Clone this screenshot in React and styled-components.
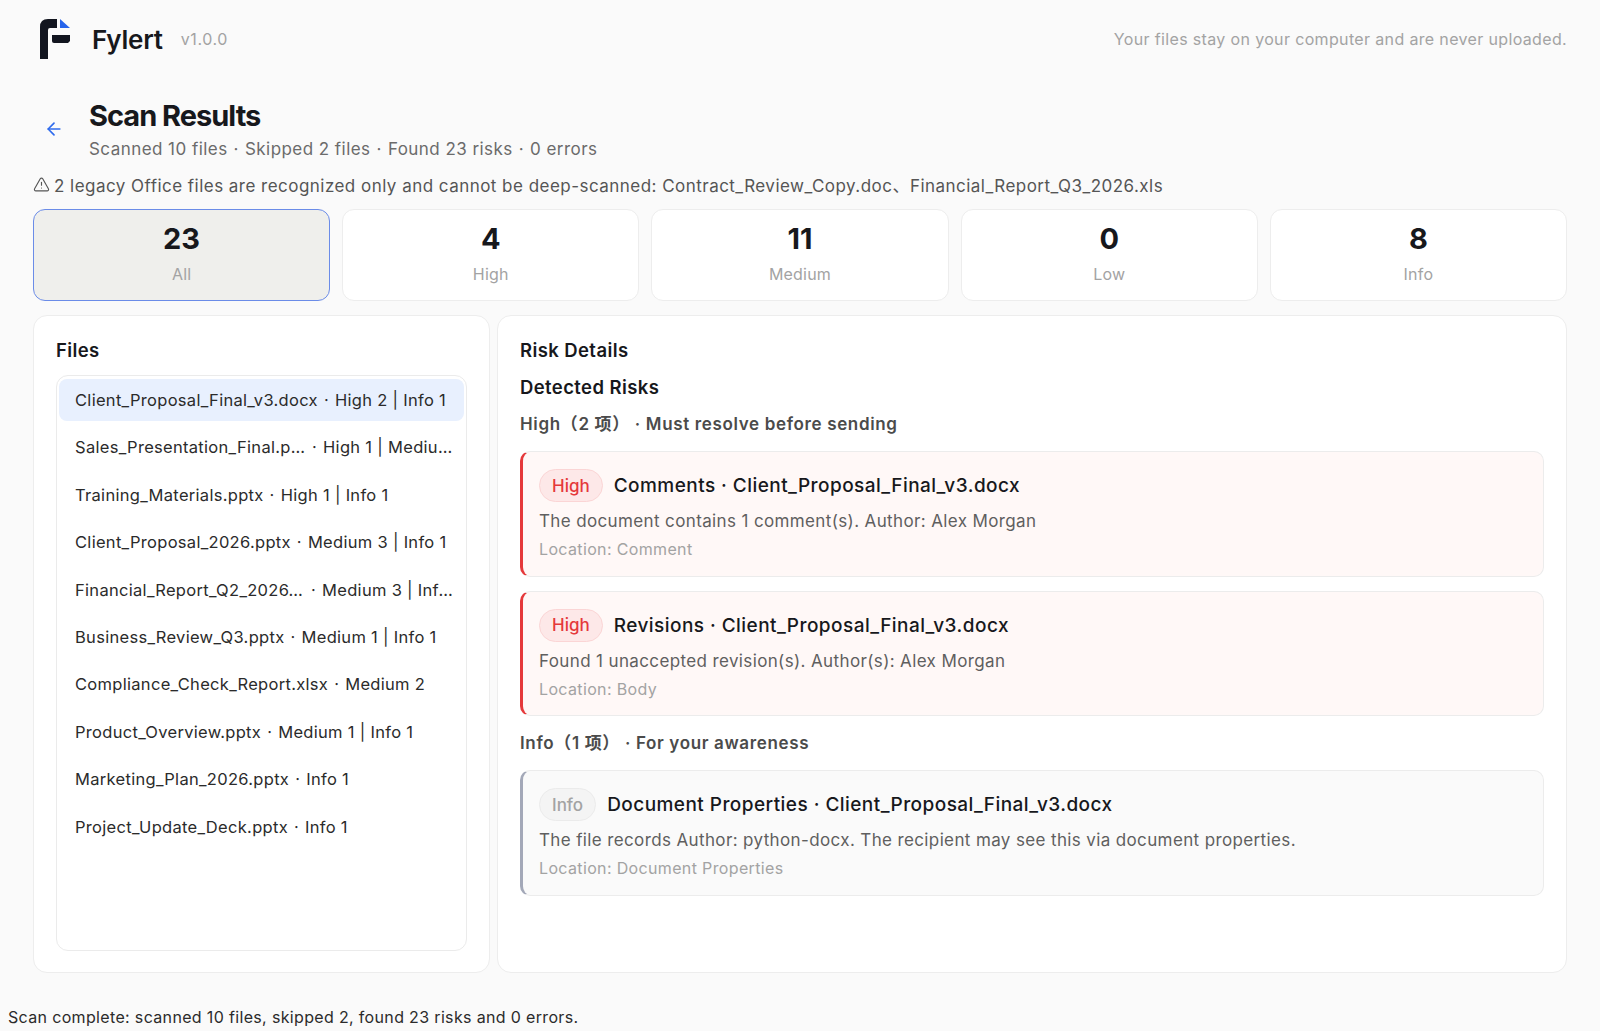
import React, { useState } from 'react';
import styled, { createGlobalStyle } from 'styled-components';
import { ArrowLeft, TriangleAlert } from 'lucide-react';

const files = [
  { name: 'Client_Proposal_Final_v3.docx', summary: 'High 2 | Info 1' },
  { name: 'Sales_Presentation_Final.pptx', summary: 'High 1 | Medium 2 | Info 1', nameWidth: 231 },
  { name: 'Training_Materials.pptx', summary: 'High 1 | Info 1' },
  { name: 'Client_Proposal_2026.pptx', summary: 'Medium 3 | Info 1' },
  { name: 'Financial_Report_Q2_2026_Final.xlsx', summary: 'Medium 3 | Info 1', nameWidth: 230 },
  { name: 'Business_Review_Q3.pptx', summary: 'Medium 1 | Info 1' },
  { name: 'Compliance_Check_Report.xlsx', summary: 'Medium 2' },
  { name: 'Product_Overview.pptx', summary: 'Medium 1 | Info 1' },
  { name: 'Marketing_Plan_2026.pptx', summary: 'Info 1' },
  { name: 'Project_Update_Deck.pptx', summary: 'Info 1' },
];

const stats = [
  { value: 23, label: 'All' },
  { value: 4, label: 'High' },
  { value: 11, label: 'Medium' },
  { value: 0, label: 'Low' },
  { value: 8, label: 'Info' },
];

const App = () => {
  const [activeStat, setActiveStat] = useState('All');
  const [activeFile, setActiveFile] = useState(files[0].name);

  return (
    <Page>
      <GlobalStyle />
      <Header>
        <Brand>
          <svg width="34" height="42" viewBox="0 0 34 42">
            <path d="M1 41 V9 Q1 1 9 1 H18 V10 H11 Q9 10 9 12 V41 Z" fill="#12151f" />
            <path d="M13 17 H31 V23 L29 25 H15 Q13 25 13 23 Z" fill="#12151f" />
            <path d="M21 1 L31 10 H21 Z" fill="#2563eb" />
          </svg>
          <BrandName>Fylert</BrandName>
          <Version>v1.0.0</Version>
        </Brand>
        <Privacy>Your files stay on your computer and are never uploaded.</Privacy>
      </Header>

      <Main>
        <TitleRow>
          <BackButton aria-label="Back">
            <ArrowLeft size={20} strokeWidth={2} />
          </BackButton>
          <div>
            <PageTitle>Scan Results</PageTitle>
            <SubTitle>
              Scanned 10 files<SubDot>·</SubDot>Skipped 2 files<SubDot>·</SubDot>Found 23 risks<SubDot>·</SubDot>0 errors
            </SubTitle>
          </div>
        </TitleRow>

        <Warning>
          <TriangleAlert size={17} strokeWidth={1.6} />
          2 legacy Office files are recognized only and cannot be deep-scanned: Contract_Review_Copy.doc、Financial_Report_Q3_2026.xls
        </Warning>

        <StatGrid>
          {stats.map((s) => (
            <StatCard key={s.label} $active={activeStat === s.label} onClick={() => setActiveStat(s.label)}>
              <StatValue>{s.value}</StatValue>
              <StatLabel>{s.label}</StatLabel>
            </StatCard>
          ))}
        </StatGrid>

        <Columns>
          <Panel>
            <PanelTitle>Files</PanelTitle>
            <FileList>
              {files.map((f) => (
                <FileItem key={f.name} $active={activeFile === f.name} onClick={() => setActiveFile(f.name)}>
                  <FileName $width={f.nameWidth}>{f.name}</FileName>
                  <Dot>·</Dot>
                  <FileSummary>{f.summary}</FileSummary>
                </FileItem>
              ))}
            </FileList>
          </Panel>

          <Panel>
            <PanelTitle>Risk Details</PanelTitle>
            <SectionTitle>Detected Risks</SectionTitle>
            <GroupTitle>High（2 项） · Must resolve before sending</GroupTitle>
            <RiskCard $level="high">
              <RiskHead>
                <Pill $level="high">High</Pill>
                <RiskTitle>Comments · Client_Proposal_Final_v3.docx</RiskTitle>
              </RiskHead>
              <RiskText>The document contains 1 comment(s). Author: Alex Morgan</RiskText>
              <RiskLocation>Location: Comment</RiskLocation>
            </RiskCard>
            <RiskCard $level="high">
              <RiskHead>
                <Pill $level="high">High</Pill>
                <RiskTitle>Revisions · Client_Proposal_Final_v3.docx</RiskTitle>
              </RiskHead>
              <RiskText>Found 1 unaccepted revision(s). Author(s): Alex Morgan</RiskText>
              <RiskLocation>Location: Body</RiskLocation>
            </RiskCard>
            <GroupTitle>Info（1 项） · For your awareness</GroupTitle>
            <RiskCard $level="info">
              <RiskHead>
                <Pill $level="info">Info</Pill>
                <RiskTitle>Document Properties · Client_Proposal_Final_v3.docx</RiskTitle>
              </RiskHead>
              <RiskText>The file records Author: python-docx. The recipient may see this via document properties.</RiskText>
              <RiskLocation>Location: Document Properties</RiskLocation>
            </RiskCard>
          </Panel>
        </Columns>
      </Main>

      <StatusBar>Scan complete: scanned 10 files, skipped 2, found 23 risks and 0 errors.</StatusBar>
    </Page>
  );
};

const GlobalStyle = createGlobalStyle`
  * { box-sizing: border-box; }
  body {
    margin: 0;
    background: #fafafa;
    color: #17181c;
    font-family: Inter, "Noto Sans CJK SC", sans-serif;
  }
`;

const Page = styled.div`
  height: 1031px;
  display: flex;
  flex-direction: column;
  overflow: hidden;
`;

const Header = styled.header`
  height: 78px;
  padding: 0 33px 0 39px;
  display: flex;
  align-items: center;
  justify-content: space-between;
`;

const Brand = styled.div`
  display: flex;
  align-items: center;
`;

const BrandName = styled.span`
  margin-left: 19px;
  font-size: 26px;
  font-weight: 600;
  letter-spacing: -0.2px;
`;

const Version = styled.span`
  margin-left: 18px;
  font-size: 16px;
  letter-spacing: 0.6px;
  color: #a3a3a3;
`;

const Privacy = styled.span`
  font-size: 16px;
  letter-spacing: 0.35px;
  color: #a3a3a3;
`;

const Main = styled.main`
  flex: 1;
  min-height: 0;
  padding: 20px 33px 0;
  display: flex;
  flex-direction: column;
`;

const TitleRow = styled.div`
  display: flex;
  align-items: center;
`;

const BackButton = styled.button`
  width: 40px;
  height: 40px;
  margin: 0 16px 1px 1px;
  padding: 0;
  border: none;
  background: none;
  color: #2f6bed;
  display: flex;
  align-items: center;
  justify-content: center;
  cursor: pointer;
`;

const PageTitle = styled.h1`
  margin: 0 0 0 -1px;
  font-size: 29px;
  line-height: 36px;
  font-weight: 700;
  letter-spacing: -1px;
  color: #17181c;
`;

const SubTitle = styled.div`
  margin: 3px 0 0 -1px;
  font-size: 17px;
  line-height: 24px;
  letter-spacing: 0.45px;
  color: #6b6b6b;
`;

const SubDot = styled.span`
  margin: 0 6px;
`;

const Warning = styled.div`
  margin-top: 11px;
  height: 24px;
  display: flex;
  align-items: center;
  gap: 4px;
  font-size: 17px;
  letter-spacing: 0.47px;
  color: #555;
`;

const StatGrid = styled.div`
  margin-top: 13px;
  display: grid;
  grid-template-columns: repeat(5, 1fr);
  gap: 12px;
`;

const StatCard = styled.button`
  height: 92px;
  padding: 0 0 3px;
  border: ${(p) => (p.$active ? '1.5px solid #6b8ce8' : '1px solid #ededed')};
  border-radius: 12px;
  background: ${(p) => (p.$active ? '#efefec' : '#fff')};
  font-family: inherit;
  cursor: pointer;
`;

const StatValue = styled.div`
  font-size: 29px;
  line-height: 36px;
  font-weight: 700;
  color: #17181c;
`;

const StatLabel = styled.div`
  margin-top: 5px;
  font-size: 16px;
  line-height: 24px;
  letter-spacing: 0.2px;
  color: #a3a3a3;
`;

const Columns = styled.div`
  margin-top: 14px;
  height: 658px;
  display: grid;
  grid-template-columns: 457px 1fr;
  gap: 7px;
`;

const Panel = styled.section`
  min-width: 0;
  padding: 21px 22px 21px;
  background: #fff;
  border: 1px solid #ededed;
  border-radius: 14px;
  display: flex;
  flex-direction: column;
`;

const PanelTitle = styled.h2`
  margin: 0;
  font-size: 18.5px;
  line-height: 26px;
  font-weight: 600;
  letter-spacing: 0.4px;
  color: #17181c;
`;

const FileList = styled.div`
  margin-top: 12px;
  flex: 1;
  padding: 3px 2px;
  border: 1px solid #ebebeb;
  border-radius: 12px;
  display: flex;
  flex-direction: column;
  gap: 5.4px;
`;

const FileItem = styled.div`
  flex: none;
  height: 42px;
  padding: 0 8px 0 16px;
  border-radius: 8px;
  background: ${(p) => (p.$active ? '#e8f0fe' : 'transparent')};
  display: flex;
  align-items: center;
  font-size: 16.5px;
  letter-spacing: 0.3px;
  color: #2b2b2b;
  white-space: nowrap;
  cursor: pointer;
`;

const FileName = styled.span`
  flex: ${(p) => (p.$width ? `0 0 ${p.$width}px` : '0 1 auto')};
  min-width: 0;
  overflow: hidden;
  text-overflow: ellipsis;
`;

const Dot = styled.span`
  flex: none;
  margin: 0 6px;
`;

const FileSummary = styled.span`
  min-width: 0;
  overflow: hidden;
  text-overflow: ellipsis;
`;

const SectionTitle = styled.h3`
  margin: 11px 0 0;
  font-size: 18.5px;
  line-height: 26px;
  font-weight: 600;
  letter-spacing: 0.4px;
  color: #17181c;
`;

const GroupTitle = styled.h4`
  margin: 11px 0 0;
  font-size: 17px;
  line-height: 26px;
  font-weight: 600;
  letter-spacing: 0.65px;
  color: #4b4b4b;
  & + div { margin-top: 14px; }
`;

const RiskCard = styled.div`
  height: 125.5px;
  margin-bottom: 14px;
  padding: 17px 18px 0 16px;
  border: 1px solid #ececec;
  border-left: 3px solid ${(p) => (p.$level === 'high' ? '#e5393b' : '#a3a8b8')};
  border-radius: 10px;
  background: ${(p) => (p.$level === 'high' ? '#fff8f7' : '#fafafa')};
  & + h4 { margin-top: 0; }
`;

const RiskHead = styled.div`
  display: flex;
  align-items: center;
  gap: 11px;
`;

const Pill = styled.span`
  height: 33px;
  padding: 0 12px;
  border-radius: 17px;
  border: 1px solid ${(p) => (p.$level === 'high' ? '#fbd5d5' : '#ebebeb')};
  background: ${(p) => (p.$level === 'high' ? '#fde8e8' : '#f4f4f4')};
  color: ${(p) => (p.$level === 'high' ? '#e5393b' : '#a3a3a3')};
  font-size: 17px;
  font-weight: 500;
  display: flex;
  align-items: center;
`;

const RiskTitle = styled.span`
  font-size: 19px;
  font-weight: 500;
  letter-spacing: 0.45px;
  color: #17181c;
`;

const RiskText = styled.div`
  margin-top: 6px;
  font-size: 17px;
  line-height: 26px;
  letter-spacing: 0.37px;
  color: #5f5f5f;
`;

const RiskLocation = styled.div`
  margin-top: 3px;
  font-size: 16px;
  line-height: 24px;
  letter-spacing: 0.35px;
  color: #a3a3a3;
`;

const StatusBar = styled.footer`
  height: 30px;
  padding: 0 8px;
  font-size: 16px;
  line-height: 32px;
  letter-spacing: 0.34px;
  color: #2b2b2b;
`;

export default App;
